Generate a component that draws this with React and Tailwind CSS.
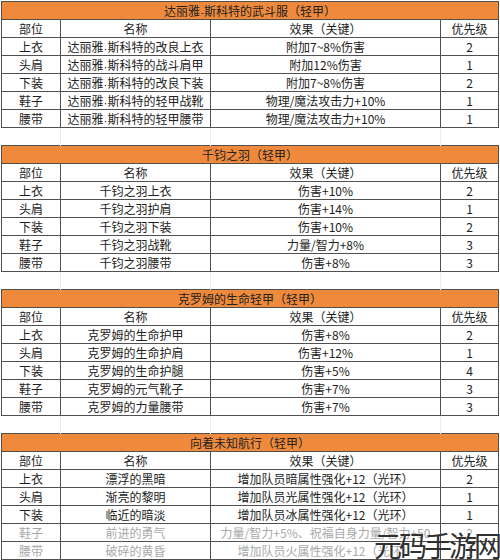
const sections = [
  {
    title: "达丽雅·斯科特的武斗服（轻甲）",
    rows: [
      ["上衣", "达丽雅·斯科特的改良上衣", "附加7~8%伤害", "2"],
      ["头肩", "达丽雅·斯科特的战斗肩甲", "附加12%伤害", "1"],
      ["下装", "达丽雅·斯科特的改良下装", "附加7~8%伤害", "2"],
      ["鞋子", "达丽雅·斯科特的轻甲战靴", "物理/魔法攻击力+10%", "1"],
      ["腰带", "达丽雅·斯科特的轻甲腰带", "物理/魔法攻击力+10%", "1"],
    ],
  },
  {
    title: "千钧之羽（轻甲）",
    rows: [
      ["上衣", "千钧之羽上衣", "伤害+10%", "2"],
      ["头肩", "千钧之羽护肩", "伤害+14%", "1"],
      ["下装", "千钧之羽下装", "伤害+10%", "2"],
      ["鞋子", "千钧之羽战靴", "力量/智力+8%", "3"],
      ["腰带", "千钧之羽腰带", "伤害+8%", "3"],
    ],
  },
  {
    title: "克罗姆的生命轻甲（轻甲）",
    rows: [
      ["上衣", "克罗姆的生命护甲", "伤害+8%", "2"],
      ["头肩", "克罗姆的生命护肩", "伤害+12%", "1"],
      ["下装", "克罗姆的生命护腿", "伤害+5%", "4"],
      ["鞋子", "克罗姆的元气靴子", "伤害+7%", "3"],
      ["腰带", "克罗姆的力量腰带", "伤害+7%", "3"],
    ],
  },
  {
    title: "向着未知航行（轻甲）",
    rows: [
      ["上衣", "漂浮的黑暗", "增加队员暗属性强化+12（光环）", "2"],
      ["头肩", "渐亮的黎明", "增加队员光属性强化+12（光环）", "1"],
      ["下装", "临近的暗淡", "增加队员冰属性强化+12（光环）", "1"],
      ["鞋子", "前进的勇气", "力量/智力+5%、祝福自身力量/智力+50", "2", true],
      ["腰带", "破碎的黄昏", "增加队员火属性强化+12（光环）", "1", true],
    ],
  },
];

const cell = "h-[18px] p-0 border border-[#505050] text-center leading-[17px] whitespace-nowrap overflow-hidden";

// the name dot is a narrow latin middle dot in the source, not the CJK full-width one
function Txt({ children }) {
  const parts = children.split("·");
  if (parts.length === 1) return children;
  return (
    <>
      {parts[0]}
      <span className="inline-block h-[12px] leading-[12px] align-middle font-['Liberation_Sans']">·</span>
      {parts[1]}
    </>
  );
}

function Spacer() {
  return (
    <tr>
      <td className="h-[18px] p-0"></td>
      <td className="h-[18px] p-0 border-x border-[#ececec]"></td>
      <td className="h-[18px] p-0 border-r border-[#ececec]"></td>
      <td className="h-[18px] p-0"></td>
    </tr>
  );
}

export default function App() {
  return (
    <div
      className="relative w-[500px] h-[560px] overflow-hidden bg-white pt-[1px] pl-[1px] text-[12px] text-[#222]"
      style={{ fontFamily: '"Noto Sans CJK SC", "Noto Sans", sans-serif' }}
    >
      <table className="w-[497px] table-fixed border-collapse">
        <colgroup>
          <col className="w-[59px]" />
          <col className="w-[150px]" />
          <col className="w-[230px]" />
          <col className="w-[58px]" />
        </colgroup>
        <tbody>
          {sections.map((s, i) => (
            <SectionRows key={s.title} section={s} last={i === sections.length - 1} />
          ))}
        </tbody>
      </table>

      {/* watermark */}
      <div className="absolute right-[1px] bottom-[-3px] text-[28px] leading-[36px] tracking-[-3px] text-[#303030]">
        元码手游网
      </div>
    </div>
  );
}

function SectionRows({ section, last }) {
  return (
    <>
      <tr>
        <td colSpan={4} className={`${cell} bg-[#ef8a3d] border-[#6b4a30]`}>
          <Txt>{section.title}</Txt>
        </td>
      </tr>
      <tr>
        <td className={cell}>部位</td>
        <td className={cell}>名称</td>
        <td className={cell}>效果（关键）</td>
        <td className={cell}>优先级</td>
      </tr>
      {section.rows.map(([part, name, effect, prio, faded]) => (
        <tr key={part} className={faded ? "text-[#a8a8a8]" : ""}>
          <td className={cell}>{part}</td>
          <td className={cell}>
            <Txt>{name}</Txt>
          </td>
          <td className={cell}>{effect}</td>
          <td className={cell}>{prio}</td>
        </tr>
      ))}
      {!last && <Spacer />}
    </>
  );
}
